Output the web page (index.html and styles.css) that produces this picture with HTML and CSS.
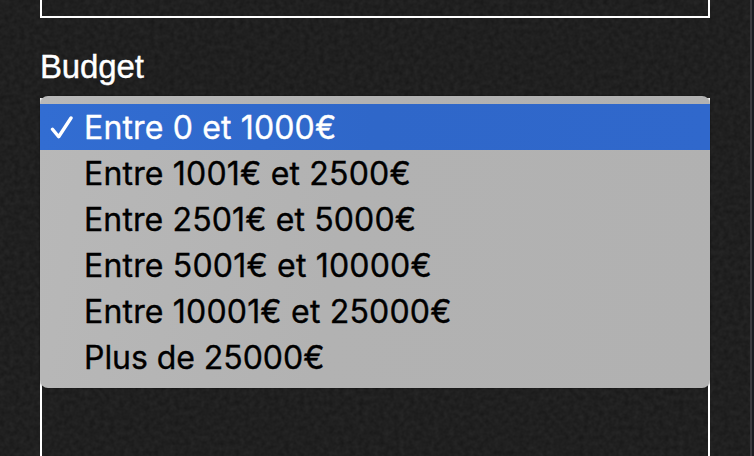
FILE: index.html
```html
<!DOCTYPE html>
<html lang="fr">
<head>
<meta charset="utf-8">
<title>Budget</title>
<link rel="stylesheet" href="styles.css">
</head>
<body>
<svg class="texture" width="754" height="456" aria-hidden="true">
  <filter id="grain" x="0" y="0" width="100%" height="100%" color-interpolation-filters="sRGB">
    <feTurbulence type="fractalNoise" baseFrequency="0.2" numOctaves="2" seed="8" stitchTiles="stitch"/>
    <feColorMatrix values="0.07 0 0 0 0.089  0.07 0 0 0 0.089  0.07 0 0 0 0.089  0 0 0 0 1"/>
  </filter>
  <rect width="754" height="456" filter="url(#grain)"/>
</svg>
<main class="page">
  <form class="form">
    <div class="field-previous"></div>
    <div class="label">Budget</div>
    <div class="field-budget">
      <ul class="menu">
        <li class="option selected"><svg class="check" viewBox="0 0 24 24" width="24" height="24"><path d="M2.5 13.2 8.7 20.8 21 2"/></svg><span>Entre 0 et 1000€</span></li>
        <li class="option wide"><span>Entre 1001€ et 2500€</span></li>
        <li class="option"><span>Entre 2501€ et 5000€</span></li>
        <li class="option wide"><span>Entre 5001€ et 10000€</span></li>
        <li class="option wide"><span>Entre 10001€ et 25000€</span></li>
        <li class="option tight"><span>Plus de 25000€</span></li>
      </ul>
    </div>
  </form>
  <div class="edge"></div>
</main>
</body>
</html>
```
FILE: styles.css
```css
* { box-sizing: border-box; }
body { margin: 0; background: #1f1f1f; overflow: hidden; }
.texture { position: absolute; inset: 0; z-index: -1; }
.page { display: flex; justify-content: space-between; height: 456px; padding-left: 40px; }
.form { width: 670px; display: flex; flex-direction: column; }
.field-previous { height: 18px; border: 2px solid #fff; border-top: 0; }
.label {
  height: 80px;
  padding-top: 30px;
  font: 33px/38px "Liberation Sans", Arial, sans-serif;
  letter-spacing: -0.15px;
  -webkit-text-stroke: 0.4px;
  color: #fff;
}
.field-budget {
  position: relative;
  flex: 1;
  border: 2px solid #fff;
  border-bottom: 0;
}
.menu {
  position: absolute;
  top: -4px;
  left: -2px;
  width: 670px;
  height: 292px;
  margin: 0;
  padding: 8px 0;
  list-style: none;
  border-radius: 8px;
  background: linear-gradient(100deg, #b8b8b8, #b2b2b2 45%, #b1b1b1);
  box-shadow: 0 0 2px rgba(0, 0, 0, 0.5);
}
.option {
  display: flex;
  align-items: center;
  height: 46px;
  padding: 2px 0 0 44px;
  font: 32px/44px Inter, sans-serif;
  letter-spacing: 0.12px;
  -webkit-text-stroke: 0.35px;
  color: #000;
  white-space: nowrap;
}
.wide { letter-spacing: 0.18px; }
.tight { letter-spacing: -0.05px; }
.selected {
  padding-left: 10px;
  letter-spacing: 0.15px;
  background: linear-gradient(90deg, #326dd2, #2f67c9 50%, #3068cc);
  color: #fff;
}
.check { width: 24px; margin-right: 10px; fill: none; stroke: #fff; stroke-width: 3.4; stroke-linecap: round; stroke-linejoin: round; }
.edge { width: 4px; border-left: 2px solid #3a393c; background: #1b1b20; }
```
